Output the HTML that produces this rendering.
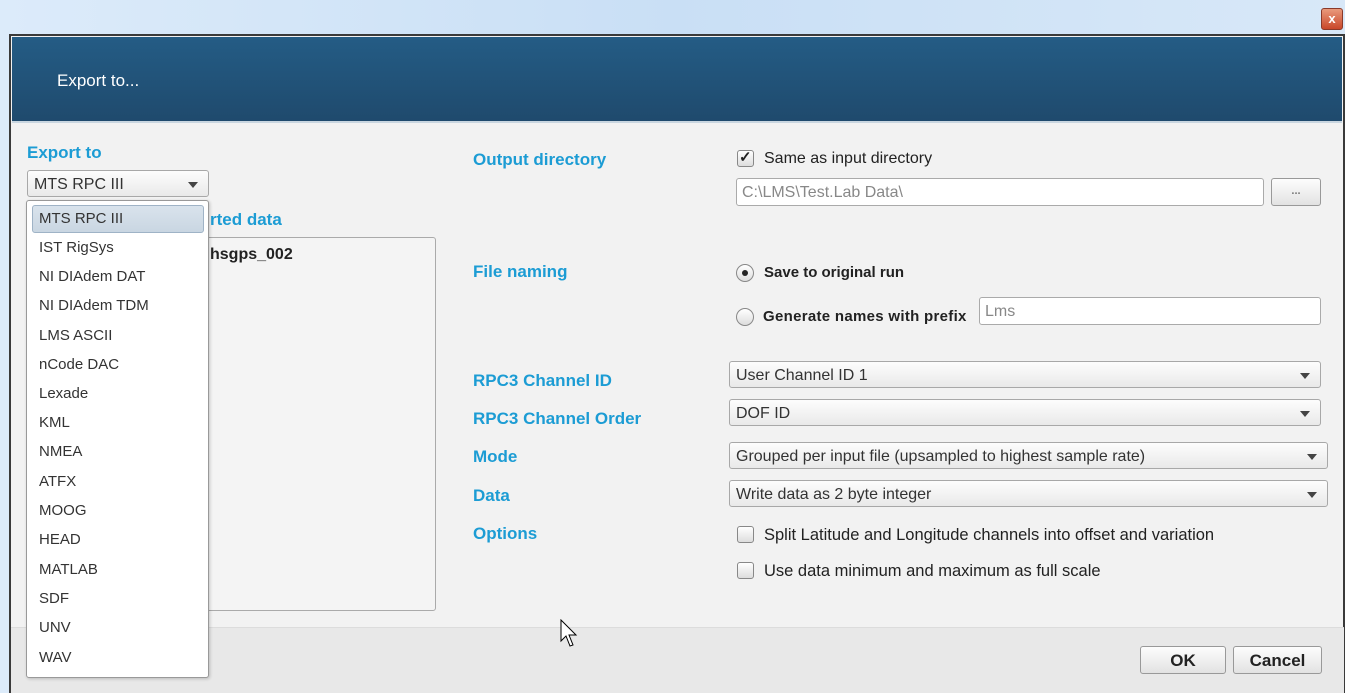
<!DOCTYPE html>
<html><head><style>
*{box-sizing:border-box;margin:0;padding:0}
body{width:1345px;height:693px;overflow:hidden;background:linear-gradient(90deg,#dcebfa,#c9dff5 50%,#d8e8f8);font-family:"Liberation Sans",sans-serif;font-size:16px;color:#222;position:relative}
.a{position:absolute;white-space:nowrap}
.lbl{color:#1c9cd4;font-weight:bold;font-size:17px}
.combo{position:absolute;height:27px;border:1px solid #a8a8a8;border-radius:3px;background:linear-gradient(#fdfdfd,#e9e9e9);padding:5px 6px 0;font-size:16px;color:#333}
.combo:after{content:"";position:absolute;right:10px;top:11px;border-left:5px solid transparent;border-right:5px solid transparent;border-top:6px solid #444}
.inp{position:absolute;height:28px;border:1px solid #aaa;border-radius:3px;background:#fff;padding:5px 5px;color:#888}
.rad{position:absolute;width:18px;height:18px;border-radius:50%;border:1px solid #888;background:linear-gradient(#fff,#ddd)}
.chk{position:absolute;width:17px;height:17px;border-radius:3px;border:1px solid #888;background:linear-gradient(#fff,#ddd)}
.btn{position:absolute;height:28px;border:1px solid #999;border-radius:3px;background:linear-gradient(#fdfdfd,#e2e2e2);font-weight:bold;font-size:17px;text-align:center;padding-top:4px}
.it{position:absolute;left:12px;font-size:15px;color:#333}
</style></head><body>
<div class="a" style="left:1321px;top:8px;width:22px;height:22px;border-radius:3px;background:linear-gradient(#e99a7c,#c9472a);border:1px solid #8a3a2a;color:#fff;font-weight:bold;font-size:13px;text-align:center;line-height:19px">x</div>
<div class="a" style="left:9px;top:34px;width:1336px;height:659px;border:2px solid #3a3a3a;border-bottom:none;background:#f2f2f2"></div>
<div class="a" style="left:12px;top:37px;width:1330px;height:86px;background:linear-gradient(#245c85,#1f4a6d);border-bottom:2px solid #c9d6e0"></div>
<div class="a" style="left:57px;top:71px;color:#fff;font-size:17px">Export to...</div>
<div class="a" style="left:11px;top:627px;width:1333px;height:66px;background:#e8e8e8;border-top:1px solid #dcdcdc"></div>

<div class="a lbl" style="left:27px;top:143px">Export to</div>
<div class="a lbl" style="left:210px;top:210px">rted data</div>
<div class="a" style="left:190px;top:237px;width:246px;height:374px;border:1px solid #aaa;border-radius:3px;background:#f4f4f4"></div>
<div class="a" style="left:210px;top:246px;font-weight:bold">hsgps_002</div>

<div class="combo" style="left:27px;top:170px;width:182px">MTS RPC III</div>
<div class="a" style="left:26px;top:200px;width:183px;height:478px;border:1px solid #999;border-radius:3px;background:#fff;box-shadow:1px 1px 3px rgba(0,0,0,.2)">
<div class="a" style="left:5px;top:4px;width:172px;height:28px;border:1px solid #9fb3c6;border-radius:3px;background:linear-gradient(#d9e3ec,#c9d6e2)"></div>
<div class="it" style="top:9px">MTS RPC III</div>
<div class="it" style="top:38px">IST RigSys</div>
<div class="it" style="top:67px">NI DIAdem DAT</div>
<div class="it" style="top:96px">NI DIAdem TDM</div>
<div class="it" style="top:126px">LMS ASCII</div>
<div class="it" style="top:155px">nCode DAC</div>
<div class="it" style="top:184px">Lexade</div>
<div class="it" style="top:213px">KML</div>
<div class="it" style="top:242px">NMEA</div>
<div class="it" style="top:272px">ATFX</div>
<div class="it" style="top:301px">MOOG</div>
<div class="it" style="top:330px">HEAD</div>
<div class="it" style="top:360px">MATLAB</div>
<div class="it" style="top:389px">SDF</div>
<div class="it" style="top:418px">UNV</div>
<div class="it" style="top:448px">WAV</div>
</div>

<div class="a lbl" style="left:473px;top:150px">Output directory</div>
<div class="chk" style="left:737px;top:150px"></div>
<div class="a" style="left:739px;top:148px;font-size:15px;font-weight:bold">✓</div>
<div class="a" style="left:764px;top:150px">Same as input directory</div>
<div class="inp" style="left:736px;top:178px;width:528px">C:\LMS\Test.Lab Data\</div>
<div class="btn" style="left:1271px;top:178px;width:50px;font-size:11px;color:#777;padding-top:6px">...</div>

<div class="a lbl" style="left:473px;top:262px">File naming</div>
<div class="rad" style="left:736px;top:264px"></div>
<div class="a" style="left:742px;top:270px;width:6px;height:6px;border-radius:50%;background:#222"></div>
<div class="a" style="left:764px;top:264px;font-weight:bold;font-size:15px">Save to original run</div>
<div class="rad" style="left:736px;top:308px"></div>
<div class="a" style="left:763px;top:308px;font-weight:bold;font-size:15px;letter-spacing:.3px">Generate names with prefix</div>
<div class="inp" style="left:979px;top:297px;width:342px">Lms</div>

<div class="a lbl" style="left:473px;top:371px">RPC3 Channel ID</div>
<div class="combo" style="left:729px;top:361px;width:592px">User Channel ID 1</div>
<div class="a lbl" style="left:473px;top:409px">RPC3 Channel Order</div>
<div class="combo" style="left:729px;top:399px;width:592px">DOF ID</div>
<div class="a lbl" style="left:473px;top:447px">Mode</div>
<div class="combo" style="left:729px;top:442px;width:599px">Grouped per input file (upsampled to highest sample rate)</div>
<div class="a lbl" style="left:473px;top:486px">Data</div>
<div class="combo" style="left:729px;top:480px;width:599px">Write data as 2 byte integer</div>
<div class="a lbl" style="left:473px;top:524px">Options</div>
<div class="chk" style="left:737px;top:526px"></div>
<div class="a" style="left:764px;top:526px;font-size:16.5px">Split Latitude and Longitude channels into offset and variation</div>
<div class="chk" style="left:737px;top:562px"></div>
<div class="a" style="left:764px;top:562px;font-size:16.5px">Use data minimum and maximum as full scale</div>

<svg class="a" style="left:560px;top:619px" width="20" height="30" viewBox="0 0 20 30"><path d="M1 1 L1 22 L6 17 L10 27 L13 26 L9 16 L16 16 Z" fill="#fff" stroke="#000" stroke-width="1"/></svg>

<div class="btn" style="left:1140px;top:646px;width:86px">OK</div>
<div class="btn" style="left:1233px;top:646px;width:89px">Cancel</div>
</body></html>
